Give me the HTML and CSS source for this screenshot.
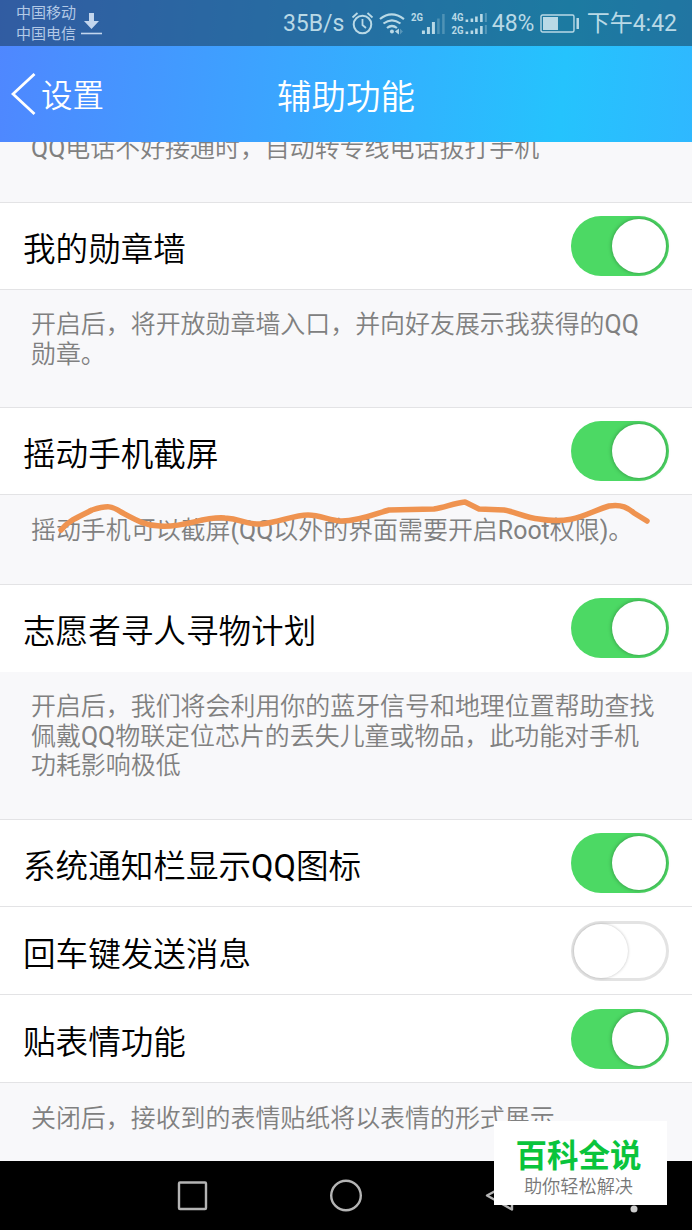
FILE: index.html
```
<!DOCTYPE html>
<html lang="zh-CN">
  <head>
    <meta charset="UTF-8" />
    <meta name="viewport" content="width=device-width, initial-scale=1" />
    <title>辅助功能</title>
    <link rel="stylesheet" href="styles.css">
  </head>
  <body>
    <div class="top">
      <div class="status-bar">
        <div class="carrier">
          <div>中国移动</div>
          <div>中国电信</div>
        </div>
        <svg class="download" width="22" height="24" viewBox="0 0 22 24">
          <path d="M8 1h5v8h5l-7.500 8L3 9h5z" fill="currentColor" />
          <path d="M0 21.500h21" stroke="currentColor" stroke-width="1.600" />
        </svg>
        <span class="speed">35B/s</span>
        <svg class="status-icons" width="138" height="28" viewBox="0 0 138 28" fill="none" stroke="currentColor">
          <!-- alarm -->
          <circle cx="12.500" cy="14.500" r="8.800" stroke-width="2" />
          <path d="M12.500 9v6l3.500 3M2.500 7.500l5-4.500M17.500 3l5 4.500" stroke-width="1.800" />
          <!-- wifi -->
          <path d="M30 9q11.500-9.500 24 0M33.500 13.500q8.500-6.500 17 0M37 18q5-4 10 0" stroke-width="2.200" />
          <circle cx="42" cy="21.500" r="2" fill="currentColor" stroke="none" />
          <path d="M45 21.500l4-3v6z" fill="currentColor" stroke="none" />
          <path d="M50 18.500l3 3-3 3z" fill="currentColor" stroke="none" opacity=".35" />
          <!-- signal -->
          <text x="61" y="11" class="net" textLength="12" lengthAdjust="spacingAndGlyphs">2G</text>
          <path d="M73.500 24v-3.500M78.500 24v-7M83.500 24V12" stroke-width="3" />
          <path d="M88.500 24V8.500M93.500 24V4" stroke-width="2.500" opacity=".3" />
          <text x="101.500" y="11.500" class="net" textLength="12" lengthAdjust="spacingAndGlyphs">4G</text>
          <text x="101.500" y="24" class="net" textLength="12" lengthAdjust="spacingAndGlyphs">2G</text>
          <path d="M117 12v-2.500M122 12V8.500M126.500 12V6.500M131.500 12V4M117 24v-2.500M122 24v-3.500M126.500 24v-5.500M131.500 24v-8" stroke-width="2.600" />
          <path d="M136 12V3M136 24v-9" stroke-width="2" opacity=".35" />
        </svg>
        <span class="percent">48%</span>
        <svg class="battery" width="40" height="20" viewBox="0 0 40 20">
          <rect x="1" y="1" width="33" height="17" rx="1.500" fill="none" stroke="currentColor" stroke-width="1.400" />
          <rect x="3" y="3" width="15" height="13" fill="currentColor" />
          <rect x="36.500" y="4" width="2.500" height="11" fill="currentColor" />
        </svg>
        <span class="clock">下午4:42</span>
      </div>
      <div class="nav-bar">
        <svg class="back" width="26" height="44" viewBox="0 0 26 44">
          <path d="M23.500 2L2 22l21.500 20" fill="none" stroke="#fff" stroke-width="2.800" />
        </svg>
        <span class="back-text">设置</span>
        <h1>辅助功能</h1>
      </div>
    </div>

    <div class="settings">
      <p class="desc desc-cut"><span class="en">QQ</span>电话不好接通时，自动转专线电话拔打手机</p>
      <div class="row"><div class="label">我的勋章墙</div><i class="switch on"></i></div>
      <p class="desc desc-two">开启后，将开放勋章墙入口，并向好友展示我获得的<span class="en">QQ</span><br>勋章。</p>
      <div class="row"><div class="label">摇动手机截屏</div><i class="switch on"></i></div>
      <div class="desc desc-one">摇动手机可以截屏<span class="en">(QQ</span>以外的界面需要开启<span class="en">Root</span>权限<span class="en">)</span>。
        <svg class="scribble" width="692" height="50" viewBox="0 490 692 50">
          <path d="M61 529C69 519 79 516 92 509C108 504 112 505 121 511C136 519 146 525 160 525C185 527 203 515 225 517C242 518 246 524 262 523C280 521 294 514 308 514C321 514 330 520 342 520C360 520 374 513 389 509L434 508C446 506 454 502 465 501L479 508L504 509C516 511 526 517 539 518C575 524 588 511 609 505C622 503 628 507 634 512L647 520" />
        </svg>
      </div>
      <div class="row no-line"><div class="label">志愿者寻人寻物计划</div><i class="switch on"></i></div>
      <p class="desc desc-three">开启后，我们将会利用你的蓝牙信号和地理位置帮助查找<br>佩戴<span class="en">QQ</span>物联定位芯片的丢失儿童或物品，此功能对手机<br>功耗影响极低</p>
      <div class="row"><div class="label">系统通知栏显示<span class="en">QQ</span>图标</div><i class="switch on"></i></div>
      <div class="row joined"><div class="label">回车键发送消息</div><i class="switch"></i></div>
      <div class="row joined"><div class="label">贴表情功能</div><i class="switch on"></i></div>
      <p class="desc desc-last">关闭后，接收到的表情贴纸将以表情的形式展示</p>
    </div>

    <div class="system-bar">
      <svg width="692" height="69" viewBox="0 1161 692 69" fill="none" stroke="#b4b4b4" stroke-width="2.400">
        <rect x="179" y="1182.500" width="27" height="26.500" rx="1" />
        <circle cx="346" cy="1195.500" r="14.800" />
        <path d="M512 1182l-25 13.500 25 14z" stroke-linejoin="round" />
        <circle cx="634" cy="1209" r="3.500" fill="#ccc" stroke="none" />
      </svg>
    </div>

    <div class="watermark">
      <strong>百科全说</strong>
      <span>助你轻松解决</span>
    </div>
  </body>
</html>
```
FILE: styles.css
```
* {
  box-sizing: border-box;
}

body {
  margin: 0;
  width: 692px;
  height: 1230px;
  display: flex;
  flex-direction: column;
  position: relative;
  overflow: hidden;
  background: #f8f8fa;
  font-family: Roboto, "Noto Sans CJK SC", sans-serif;
}

.top {
  height: 142px;
  flex: none;
  background: linear-gradient(95deg, #4f87ff 0%, #3aa6ff 42%, #25c3fd 81%, #2fb8ff 100%);
}

.status-bar {
  height: 46px;
  display: flex;
  align-items: center;
  padding: 2px 15px 0 16px;
  background: rgba(20, 50, 70, 0.5);
  color: #b9d9e6;
  font-size: 23px;
  line-height: 46px;
  white-space: nowrap;
}

.carrier {
  width: 65px;
  font-size: 15px;
  line-height: 21px;
  color: #b3c9e6;
}

.download {
  color: #c3d6ee;
}

.speed {
  margin-left: 180px;
  width: 67px;
}

.net {
  font-size: 11.500px;
  font-weight: bold;
  fill: currentColor;
  stroke: none;
}

.percent {
  width: 48px;
  margin-left: 4px;
}

.battery {
  margin-right: 7px;
}

.nav-bar {
  height: 96px;
  display: grid;
  grid-template-columns: 30px 200px 210px;
  align-items: center;
  padding-left: 11px;
  color: #fff;
}

.back-text {
  font-size: 31.500px;
  font-weight: 350;
  padding-bottom: 2px;
}

.nav-bar h1 {
  margin: 0;
  font-size: 34.500px;
  font-weight: 350;
  text-align: center;
}

.settings {
  height: 1019px;
  flex: none;
  overflow: hidden;
}

.row {
  height: 88px;
  display: flex;
  align-items: center;
  justify-content: space-between;
  padding: 0 23px;
  background: #fff;
  border-top: 1px solid #e3e3e5;
  border-bottom: 1px solid #e3e3e5;
}

.row.no-line {
  border-bottom-color: #fff;
}

.row.joined {
  border-top-color: #fff;
}

.label {
  font-size: 32.600px;
  font-weight: 350;
  color: #000;
}

.en {
  font-weight: 400;
}

.desc {
  margin: 0;
  padding: 20px 0 0 31px;
  font-size: 24.950px;
  line-height: 29.500px;
  font-weight: 350;
  color: #808080;
  white-space: nowrap;
}

.desc-cut {
  height: 60px;
  padding: 0 0 0 31px;
  line-height: 14px;
}

.desc-two {
  height: 117px;
}

.desc-one {
  height: 89px;
  padding-top: 21px;
  position: relative;
}

.desc-three {
  height: 147px;
}

.desc-last {
  padding-top: 21px;
}

/* hand drawn line across the text */
.scribble {
  position: absolute;
  left: 0;
  top: -4px;
}

.scribble path {
  fill: none;
  stroke: #ef9350;
  stroke-width: 5.500;
  stroke-linecap: round;
  stroke-linejoin: round;
}

.switch {
  width: 98px;
  height: 60px;
  padding: 3px;
  border-radius: 30px;
  background: #fff;
  box-shadow: inset 0 0 0 3px #e3e3e3;
}

.switch::before {
  content: "";
  display: block;
  width: 54px;
  height: 54px;
  border-radius: 50%;
  background: #fff;
  box-shadow: 0 0 3px rgba(0, 0, 0, 0.25);
}

.switch.on {
  background: #4cd964;
  box-shadow: none;
}

.switch.on::before {
  margin-left: auto;
  box-shadow: 0 0 4px rgba(0, 0, 0, 0.35);
}

.system-bar {
  height: 69px;
  background: #000;
}

.watermark {
  position: absolute;
  left: 494px;
  top: 1121px;
  width: 173px;
  height: 84px;
  display: flex;
  flex-direction: column;
  align-items: center;
  padding: 17px 4px 0 0;
  background: #fff;
}

.watermark strong {
  font-size: 31.500px;
  line-height: 38px;
  color: #0ac43c;
}

.watermark span {
  font-size: 18.200px;
  line-height: 22px;
  font-weight: 350;
  color: #777;
}
```
